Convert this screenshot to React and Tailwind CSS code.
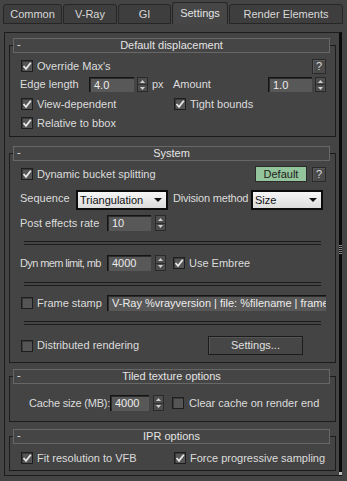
import React from "react";

const Check = ({ on = true }) => (
  <div className="w-[12px] h-[12px] shrink-0 border border-[#1e1e1e] bg-[#555555] shadow-[inset_1px_1px_0_#3a3a3a] flex items-center justify-center">
    {on && (
      <svg width="10" height="10" viewBox="0 0 10 10">
        <polyline points="1.5,5 4,7.8 8.8,1.8" fill="none" stroke="#e8e8e8" strokeWidth="1.8" />
      </svg>
    )}
  </div>
);

const Spin = ({ h = "h-[15px]" }) => (
  <div className={"flex flex-col w-[11px] shrink-0 border border-[#2a2a2a] bg-[#4d4d4d] " + h}>
    <div className="flex-1 flex items-center justify-center border-b border-[#2e2e2e]">
      <svg width="5" height="3" viewBox="0 0 5 3"><path d="M0 3 L2.5 0 L5 3Z" fill="#d0d0d0" /></svg>
    </div>
    <div className="flex-1 flex items-center justify-center">
      <svg width="5" height="3" viewBox="0 0 5 3"><path d="M0 0 L5 0 L2.5 3Z" fill="#d0d0d0" /></svg>
    </div>
  </div>
);

const Field = ({ w, children, h = "h-[15px]" }) => (
  <div className={"shrink-0 bg-[#585858] border-t border-l border-[#141414] shadow-[inset_1px_1px_0_#2c2c2c] text-[#ececec] pl-[4px] flex items-center overflow-hidden whitespace-nowrap " + w + " " + h}>
    {children}
  </div>
);

const Drop = ({ w, children }) => (
  <div className={"shrink-0 h-[20px] border-2 border-[#0c0c0c] bg-gradient-to-b from-[#f6f6f6] to-[#dcdcdc] text-[#111] flex items-center justify-between pl-[2px] pr-[4px] " + w}>
    <span>{children}</span>
    <svg width="8" height="4" viewBox="0 0 8 4"><path d="M0 0 L8 0 L4 4Z" fill="#111" /></svg>
  </div>
);

const QBtn = () => (
  <div className="w-[14px] h-[15px] shrink-0 border border-[#2a2a2a] bg-[#4a4a4a] shadow-[inset_1px_1px_0_#5a5a5a] flex items-center justify-center text-[#dcdcdc]">?</div>
);

const Sep = ({ mt }) => (
  <div className={"ml-[4px] mr-[5px] h-[4px] border-t border-b border-[#1c1c1c] " + mt} />
);

const Rollout = ({ title, mt, frame, children }) => (
  <div className={"ml-[4px] w-[327px] " + mt}>
    <div className="relative z-10 ml-[4px] w-[317px] h-[15px] border border-[#676767] bg-[#454545] flex items-center">
      <span className="absolute left-[3px] top-[-1px] text-[#e0e0e0]">-</span>
      <span className="w-full text-center text-[#e4e4e4] leading-[13px]">{title}</span>
    </div>
    <div className={"-mt-[8px] border border-[#1c1c1c] " + frame}>{children}</div>
  </div>
);

const Tab = ({ label, w, active }) => (
  <div
    className={
      active
        ? "h-[22px] flex items-center justify-center rounded-t-[3px] border border-b-0 border-[#262626] bg-[#464646] text-[#e2e2e2] " + w
        : "h-[20px] flex items-center justify-center rounded-t-[3px] border border-[#262626] bg-[#3e3e3e] text-[#d8d8d8] " + w
    }
  >
    {label}
  </div>
);

export default function App() {
  return (
    <div className="w-[347px] h-[481px] overflow-hidden bg-[#444444] font-['Liberation_Sans',Arial,sans-serif] text-[11px] text-[#dcdcdc] leading-[13px] whitespace-nowrap">
      <div className="flex items-end pl-[3px] pt-[2px] gap-[1px]">
        <Tab label="Common" w="w-[59px]" />
        <Tab label="V-Ray" w="w-[54px]" />
        <Tab label="GI" w="w-[53px]" />
        <Tab label="Settings" w="w-[56px]" active />
        <Tab label="Render Elements" w="w-[114px]" />
      </div>

      <div className="relative mt-[8px] ml-[4px] w-[338px] h-[444px] border-l border-t border-b border-[#1c1c1c] border-r-[3px] border-r-[#0a0a0a]">
        {/* resize grip */}
        <div className="absolute right-[-3px] top-[212px] w-[3px] flex flex-col gap-[1px]">
          <div className="h-[1px] bg-[#8a8a8a]" />
          <div className="h-[1px] bg-[#8a8a8a]" />
          <div className="h-[1px] bg-[#8a8a8a]" />
          <div className="h-[1px] bg-[#8a8a8a]" />
          <div className="h-[1px] bg-[#8a8a8a]" />
        </div>
        <div className="absolute right-[-3px] bottom-[0px] w-[3px] h-[3px] bg-[#bdbdbd]" />

        {/* Default displacement */}
        <Rollout title="Default displacement" mt="mt-[5px]" frame="pt-[13px] pb-[6px] pl-[10px] pr-[9px]">
          <div className="flex items-center h-[14px]">
            <div className="ml-[1px]"><Check /></div>
            <span className="ml-[4px]">Override Max's</span>
            <div className="ml-auto"><QBtn /></div>
          </div>
          <div className="flex items-center h-[15px] mt-[4px]">
            <span className="w-[69px]">Edge length</span>
            <Field w="w-[45px]">4.0</Field>
            <div className="ml-[3px]"><Spin /></div>
            <span className="ml-[4px] w-[21px]">px</span>
            <span>Amount</span>
            <div className="ml-auto flex items-center">
              <Field w="w-[44px]">1.0</Field>
              <div className="ml-[3px]"><Spin /></div>
            </div>
          </div>
          <div className="flex items-center h-[14px] mt-[5px]">
            <div className="ml-[1px] w-[153px] flex items-center">
              <Check />
              <span className="ml-[4px]">View-dependent</span>
            </div>
            <Check />
            <span className="ml-[4px]">Tight bounds</span>
          </div>
          <div className="flex items-center h-[14px] mt-[5px]">
            <div className="ml-[1px]"><Check /></div>
            <span className="ml-[4px]">Relative to bbox</span>
          </div>
        </Rollout>

        {/* System */}
        <Rollout title="System" mt="mt-[9px]" frame="pt-[12px] pb-[7px] pl-[10px] pr-[9px]">
          <div className="flex items-center h-[16px]">
            <div className="ml-[1px]"><Check /></div>
            <span className="ml-[4px]">Dynamic bucket splitting</span>
            <div className="ml-auto w-[52px] h-[16px] border border-[#2a2a2a] bg-[#94c49b] text-[#1c1c1c] flex items-center justify-center">Default</div>
            <div className="ml-[5px]"><QBtn /></div>
          </div>
          <div className="flex items-start mt-[8px]">
            <span className="w-[56px] mt-[2px]">Sequence</span>
            <Drop w="w-[92px]">Triangulation</Drop>
            <span className="ml-[5px] w-[78px] mt-[2px] tracking-[-0.2px]">Division method</span>
            <Drop w="w-[72px]">Size</Drop>
          </div>
          <div className="flex items-center h-[16px] mt-[5px]">
            <span className="w-[87px]">Post effects rate</span>
            <Field w="w-[44px]" h="h-[16px]">10</Field>
            <div className="ml-[4px]"><Spin h="h-[16px]" /></div>
          </div>
          <Sep mt="mt-[10px]" />
          <div className="flex items-center h-[16px] mt-[10px]">
            <span className="w-[82px] overflow-hidden tracking-[-0.6px]">Dyn mem limit, mb</span>
            <div className="ml-[5px]"><Field w="w-[44px]" h="h-[16px]">4000</Field></div>
            <div className="ml-[4px]"><Spin h="h-[16px]" /></div>
            <div className="ml-[7px]"><Check /></div>
            <span className="ml-[4px]">Use Embree</span>
          </div>
          <Sep mt="mt-[11px]" />
          <div className="flex items-center h-[16px] mt-[9px]">
            <div className="ml-[1px] w-[86px] flex items-center">
              <Check on={false} />
              <span className="ml-[4px]">Frame stamp</span>
            </div>
            <Field w="w-[219px]" h="h-[16px]">V-Ray %vrayversion | file: %filename | frame: %frame | primitives: %primitives</Field>
          </div>
          <Sep mt="mt-[10px]" />
          <div className="flex items-center h-[19px] mt-[11px]">
            <div className="ml-[1px] w-[187px] flex items-center">
              <Check on={false} />
              <span className="ml-[4px]">Distributed rendering</span>
            </div>
            <div className="w-[95px] h-[19px] border border-[#1c1c1c] bg-[#464646] shadow-[inset_1px_1px_0_#565656] flex items-center justify-center text-[#e0e0e0]">Settings...</div>
          </div>
        </Rollout>

        {/* Tiled texture options */}
        <Rollout title="Tiled texture options" mt="mt-[6px]" frame="pt-[18px] pb-[10px] pl-[19px] pr-[9px]">
          <div className="flex items-center h-[16px]">
            <span className="w-[81px] tracking-[-0.2px]">Cache size (MB):</span>
            <Field w="w-[39px]" h="h-[16px]">4000</Field>
            <div className="ml-[4px]"><Spin h="h-[16px]" /></div>
            <div className="ml-[8px]"><Check on={false} /></div>
            <span className="ml-[5px]">Clear cache on render end</span>
          </div>
        </Rollout>

        {/* IPR options */}
        <Rollout title="IPR options" mt="mt-[7px]" frame="pt-[14px] pb-[5px] pl-[10px] pr-[9px]">
          <div className="flex items-center h-[14px]">
            <div className="ml-[1px] w-[153px] flex items-center">
              <Check />
              <span className="ml-[4px]">Fit resolution to VFB</span>
            </div>
            <Check />
            <span className="ml-[4px]">Force progressive sampling</span>
          </div>
        </Rollout>
      </div>
    </div>
  );
}
